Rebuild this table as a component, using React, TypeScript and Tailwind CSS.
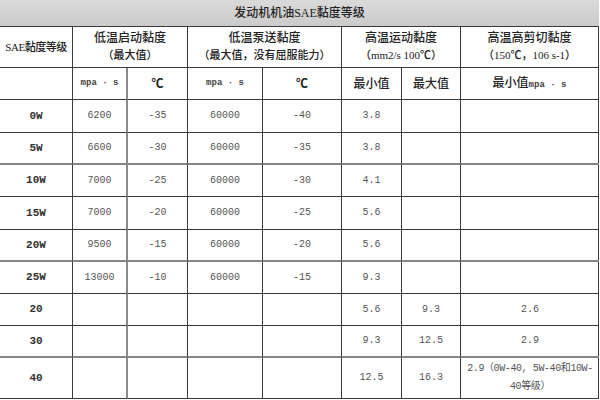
import React from 'react';

type Row = {
  grade: string;
  cells: React.ReactNode[];
  thick?: boolean;
};

const rows: Row[] = [
  { grade: '0W', cells: ['6200', '-35', '60000', '-40', '3.8', '', ''] },
  { grade: '5W', cells: ['6600', '-30', '60000', '-35', '3.8', '', ''], thick: true },
  { grade: '10W', cells: ['7000', '-25', '60000', '-30', '4.1', '', ''] },
  { grade: '15W', cells: ['7000', '-20', '60000', '-25', '5.6', '', ''] },
  { grade: '20W', cells: ['9500', '-15', '60000', '-20', '5.6', '', ''], thick: true },
  { grade: '25W', cells: ['13000', '-10', '60000', '-15', '9.3', '', ''] },
  { grade: '20', cells: ['', '', '', '', '5.6', '9.3', '2.6'] },
  { grade: '30', cells: ['', '', '', '', '9.3', '12.5', '2.9'], thick: true },
  {
    grade: '40',
    cells: [
      '',
      '',
      '',
      '',
      '12.5',
      '16.3',
      <span key="n" className="whitespace-nowrap tracking-[-0.4px]">
        2.9（0W-40, 5W-40和10W-
        <br />
        40等级）
      </span>,
    ],
  },
];

const cjk = "font-['Liberation_Serif','Noto_Sans_CJK_SC',serif]";
const mono = "font-['Liberation_Mono','Noto_Sans_CJK_SC',monospace]";

export default function App() {
  return (
    <div className="w-[600px] h-[400px] bg-white overflow-hidden text-[#222]">
      <div
        className={`w-[599px] grid grid-cols-[73px_55px_60px_75px_79px_60px_59px_138px] grid-rows-[27px_41px_32px_33px_32px_32px_33px_32px_32px_32px_32px_41px] border-r border-[#3a3a3a] ${cjk}`}
      >
        <div className="col-span-8 bg-gradient-to-b from-[#dadada] to-[#cbcbcb] border-b border-[#3a3a3a] flex items-center justify-center text-[12px] font-medium">
          发动机机油SAE黏度等级
        </div>

        <div className="border-b border-r border-[#3a3a3a] flex items-center justify-center text-[11px] font-medium tracking-[-0.5px]">
          SAE黏度等级
        </div>
        <HeaderCell span="col-span-2" top="低温启动黏度" bottom="（最大值）" />
        <HeaderCell span="col-span-2" top="低温泵送黏度" bottom="（最大值，没有屈服能力）" />
        <HeaderCell span="col-span-2" top="高温运动黏度" bottom="（mm2/s 100℃）" />
        <HeaderCell span="" top="高温高剪切黏度" bottom="（150℃，106 s-1）" />

        <div className="border-b border-r border-[#3a3a3a]" />
        <SubCell thickRight>
          <span className={`${mono} text-[9px] text-[#444] font-bold`}>mpa · s</span>
        </SubCell>
        <SubCell>
          <span className="text-[12px] font-bold">℃</span>
        </SubCell>
        <SubCell>
          <span className={`${mono} text-[9px] text-[#444] font-bold`}>mpa · s</span>
        </SubCell>
        <SubCell>
          <span className="text-[12px] font-bold">℃</span>
        </SubCell>
        <SubCell>
          <span className="text-[12px] font-medium">最小值</span>
        </SubCell>
        <SubCell>
          <span className="text-[12px] font-medium">最大值</span>
        </SubCell>
        <SubCell>
          <span className="text-[12px] font-medium">
            最小值<span className={`${mono} text-[9px] text-[#444] font-bold`}>mpa · s</span>
          </span>
        </SubCell>

        {rows.map((row) => {
          const bottom = row.thick
            ? 'border-b-2 border-b-[#858585]'
            : 'border-b border-b-[#3a3a3a]';
          return (
            <React.Fragment key={row.grade + row.cells.length + (row.thick ? 't' : '')}>
              <div
                className={`${bottom} border-r border-r-[#3a3a3a] flex items-center justify-center ${mono} text-[11px] font-bold text-[#333]`}
              >
                {row.grade}
              </div>
              {row.cells.map((value, i) => (
                <div
                  key={i}
                  className={`${bottom} ${
                    i === 0 ? 'border-r-2 border-r-[#8a8a8a]' : 'border-r border-r-[#3a3a3a]'
                  } ${i === 6 ? 'border-r-0' : ''} flex items-center justify-center text-center ${mono} text-[10px] text-[#555] leading-[18px]`}
                >
                  {value}
                </div>
              ))}
            </React.Fragment>
          );
        })}
      </div>
    </div>
  );
}

function HeaderCell({ span, top, bottom }: { span: string; top: string; bottom: string }) {
  return (
    <div
      className={`${span} border-b border-r border-[#3a3a3a] flex flex-col items-center justify-center text-[12px] font-medium leading-[17px] last:border-r-0`}
    >
      <span>{top}</span>
      <span className="text-[11px]">{bottom}</span>
    </div>
  );
}

function SubCell({ children, thickRight }: { children: React.ReactNode; thickRight?: boolean }) {
  return (
    <div
      className={`border-b border-[#3a3a3a] ${
        thickRight ? 'border-r-2 border-r-[#8a8a8a]' : 'border-r'
      } last:border-r-0 flex items-center justify-center`}
    >
      {children}
    </div>
  );
}
